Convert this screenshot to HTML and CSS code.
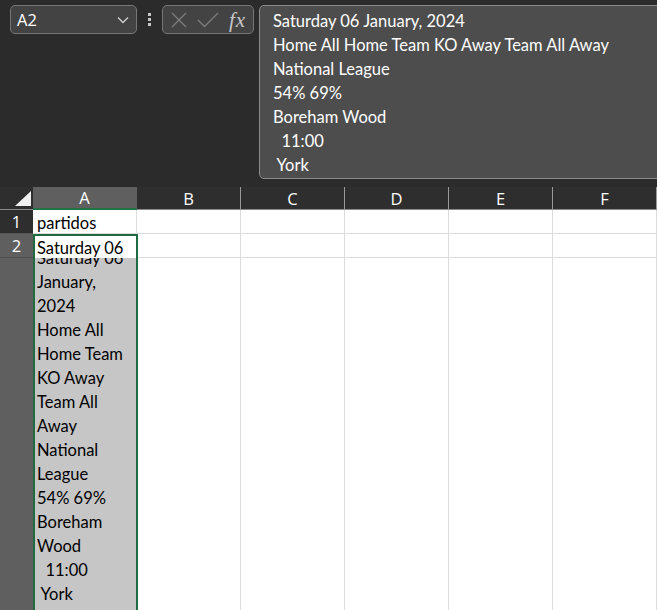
FILE: index.html
```html
<!DOCTYPE html>
<html>
<head>
<meta charset="utf-8">
<link rel="stylesheet" href="styles.css">
</head>
<body>
<div class="app">
  <div class="topbar">
    <div class="namebox">
      <span class="name">A2</span>
      <svg class="chev" width="12" height="8" viewBox="0 0 12 8"><path d="M1 1.5 L6 6.5 L11 1.5" fill="none" stroke="#d0d0d0" stroke-width="1.3"/></svg>
    </div>
    <div class="dots"><span></span><span></span><span></span></div>
    <div class="fxbox">
      <svg width="18" height="18" viewBox="0 0 18 18"><path d="M2 2 L16 16 M16 2 L2 16" stroke="#7c7c7c" stroke-width="1.4"/></svg>
      <svg width="22" height="18" viewBox="0 0 22 18"><path d="M1 9 L7.5 15.5 L21 2" fill="none" stroke="#7c7c7c" stroke-width="1.4"/></svg>
      <span class="fx">fx</span>
    </div>
    <div class="formula">
      <div>Saturday 06 January, 2024</div>
      <div>Home All Home Team KO Away Team All Away</div>
      <div>National League</div>
      <div>54% 69%</div>
      <div>Boreham Wood</div>
      <div class="pre">  11:00</div>
      <div class="pre"> York</div>
    </div>
  </div>
  <div class="sheet">
    <div class="corner"><span class="tri"></span></div>
    <div class="colhead sel">A</div>
    <div class="colhead">B</div>
    <div class="colhead">C</div>
    <div class="colhead">D</div>
    <div class="colhead">E</div>
    <div class="colhead">F</div>

    <div class="rowhead">1</div>
    <div class="cell">partidos</div>
    <div class="cell"></div>
    <div class="cell"></div>
    <div class="cell"></div>
    <div class="cell"></div>
    <div class="cell"></div>

    <div class="rowhead sel">2</div>
    <div class="active">
      <div class="edit">Saturday 06</div>
      <div class="wrapbox">
        <div class="lines">
          <div>Saturday 06</div>
          <div>January,</div>
          <div>2024</div>
          <div>Home All</div>
          <div>Home Team</div>
          <div>KO Away</div>
          <div>Team All</div>
          <div>Away</div>
          <div>National</div>
          <div>League</div>
          <div>54% 69%</div>
          <div>Boreham</div>
          <div>Wood</div>
          <div class="pre">  11:00</div>
          <div class="pre"> York</div>
        </div>
      </div>
    </div>
    <div class="cell"></div>
    <div class="cell"></div>
    <div class="cell"></div>
    <div class="cell"></div>
    <div class="cell"></div>

    <div class="rowhead sel rest"></div>
    <div class="cell tall"></div>
    <div class="cell tall"></div>
    <div class="cell tall"></div>
    <div class="cell tall"></div>
    <div class="cell tall"></div>
  </div>
</div>
</body>
</html>
```
FILE: styles.css
```css
html, body {
  margin: 0;
  padding: 0;
  background: #2b2b2b;
  overflow: hidden;
}
.app {
  width: 657px;
  height: 610px;
  display: flex;
  flex-direction: column;
  overflow: hidden;
}
.topbar {
  display: flex;
  align-items: flex-start;
  padding: 5px 0 0 10px;
  height: 182px;
  box-sizing: border-box;
}
.namebox {
  width: 127px;
  height: 29px;
  box-sizing: border-box;
  border: 1px solid #767676;
  border-radius: 5px;
  background: #434343;
  display: flex;
  align-items: center;
  justify-content: space-between;
  padding: 0 7px 0 6px;
}
.name {
  font-family: "Open Sans", "Noto Sans", sans-serif;
  font-size: 16.5px;
  color: #ffffff;
}
.dots {
  width: 25px;
  height: 29px;
  display: flex;
  flex-direction: column;
  align-items: center;
  justify-content: center;
  gap: 2px;
}
.dots span {
  width: 3px;
  height: 3px;
  background: #c8c8c8;
}
.fxbox {
  width: 92px;
  height: 29px;
  box-sizing: border-box;
  border: 1px solid #767676;
  border-radius: 5px;
  background: #434343;
  display: flex;
  align-items: center;
  padding: 0 0 0 7px;
  gap: 9px;
}
.fx {
  font-family: "Liberation Serif", "DejaVu Serif", serif;
  font-style: italic;
  font-size: 21px;
  color: #c8c8c8;
  margin-left: 1px;
  letter-spacing: 1px;
  line-height: 20px;
}
.formula {
  flex: 1;
  margin-left: 5px;
  margin-right: -12px;
  height: 174px;
  box-sizing: border-box;
  border: 1px solid #8a8a8a;
  border-radius: 5px;
  background: #4d4d4d;
  padding: 3px 0 0 13px;
  font-family: "Lato", "Open Sans", sans-serif;
  font-size: 16.5px;
  line-height: 24px;
  color: #ffffff;
}
.pre {
  white-space: pre;
}
.sheet {
  flex: 1;
  display: grid;
  grid-template-columns: 33px repeat(6, 104px);
  grid-template-rows: 23px 24px 24px 1fr;
  margin-top: 5px;
}
.corner {
  background: #2e2e2e;
  border-bottom: 1px solid #8a8a8a;
  position: relative;
}
.tri {
  position: absolute;
  right: 2px;
  bottom: 3px;
  width: 0;
  height: 0;
  border-left: 16px solid transparent;
  border-bottom: 15px solid #f0f0f0;
}
.colhead {
  background: #2e2e2e;
  color: #ffffff;
  font-family: "Open Sans", "Noto Sans", sans-serif;
  font-size: 16.5px;
  display: flex;
  align-items: center;
  justify-content: center;
  border-bottom: 1px solid #8a8a8a;
  border-right: 1px solid #9a9a9a;
  box-sizing: border-box;
}
.colhead.sel {
  background: #5f5f5f;
  border-bottom: 2px solid #217346;
  border-right: 1px solid #5f5f5f;
}
.rowhead {
  background: #2e2e2e;
  color: #ffffff;
  font-family: "Open Sans", "Noto Sans", sans-serif;
  font-size: 16.5px;
  display: flex;
  align-items: center;
  justify-content: center;
  border-bottom: 1px solid #555555;
  box-sizing: border-box;
}
.rowhead.sel {
  background: #5f5f5f;
  border-bottom: 1px solid #4d4d4d;
}
.rowhead.rest {
  border-bottom: none;
}
.cell {
  background: #ffffff;
  border-right: 1px solid #dcdcdc;
  border-bottom: 1px solid #dcdcdc;
  box-sizing: border-box;
  font-family: "Lato", "Open Sans", sans-serif;
  font-size: 16.5px;
  color: #000000;
  line-height: 23px;
  padding: 2px 0 0 4px;
  white-space: nowrap;
  overflow: hidden;
}
.cell.tall {
  border-bottom: none;
}
.active {
  grid-row: 3 / 5;
  grid-column: 2;
  border: 2px solid #1f6b41;
  border-bottom: none;
  margin-right: -1px;
  position: relative;
  z-index: 1;
  display: flex;
  flex-direction: column;
  overflow: hidden;
  font-family: "Lato", "Open Sans", sans-serif;
  font-size: 16.5px;
  color: #000000;
  line-height: 24px;
}
.edit {
  height: 22px;
  line-height: 24px;
  background: #ffffff;
  padding-left: 2px;
  white-space: nowrap;
  overflow: hidden;
}
.wrapbox {
  flex: 1;
  background: #c6c6c6;
  overflow: hidden;
  padding-left: 2px;
}
.lines {
  margin-top: -12px;
}
```
